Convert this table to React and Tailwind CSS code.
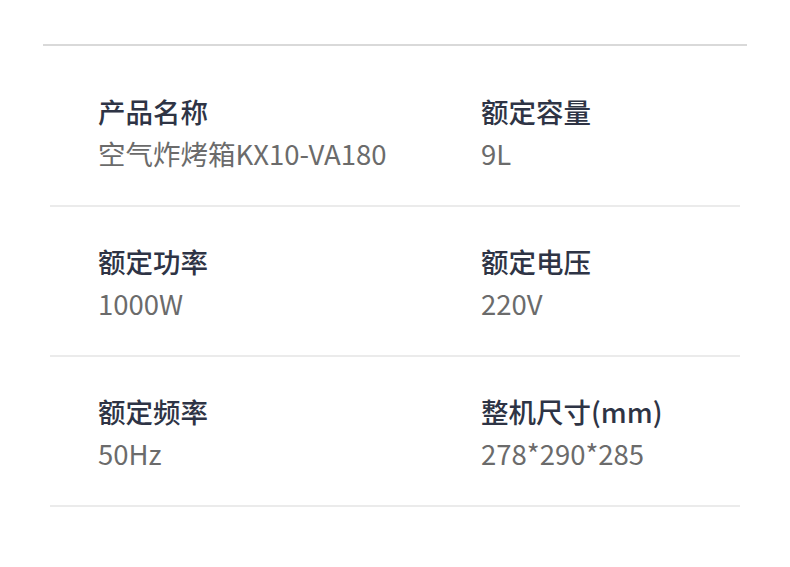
import React from 'react';

const rows = [
  [
    { label: '产品名称', value: '空气炸烤箱KX10-VA180' },
    { label: '额定容量', value: '9L' },
  ],
  [
    { label: '额定功率', value: '1000W' },
    { label: '额定电压', value: '220V' },
  ],
  [
    { label: '额定频率', value: '50Hz' },
    { label: '整机尺寸(mm)', value: '278*290*285' },
  ],
];

const Spec = ({ label, value }) => (
  <div className="flex flex-col gap-[6px]">
    <div className="text-[27.5px] leading-[36px] font-medium text-[#2e3445]">{label}</div>
    <div className="text-[27.5px] leading-[36px] text-[#6b6b6b]">{value}</div>
  </div>
);

export default function App() {
  return (
    <div
      className="w-[790px] h-[567px] bg-white overflow-hidden"
      style={{ fontFamily: '"Noto Sans CJK SC", "Noto Sans", sans-serif' }}
    >
      <div className="pt-[44px]">
        <div className="mx-[43px] h-[2px] bg-[#d9d9d9]" />
        {rows.map((row, i) => (
          <div key={i} className="mx-[50px]">
            <div className={`grid grid-cols-[383px_1fr] pl-[48px] pb-[34px] ${i === 0 ? 'pt-[47px]' : 'pt-[36px]'}`}>
              {row.map((s) => (
                <Spec key={s.label} {...s} />
              ))}
            </div>
            <div className="h-[2px] bg-[#ebebeb]" />
          </div>
        ))}
      </div>
    </div>
  );
}
